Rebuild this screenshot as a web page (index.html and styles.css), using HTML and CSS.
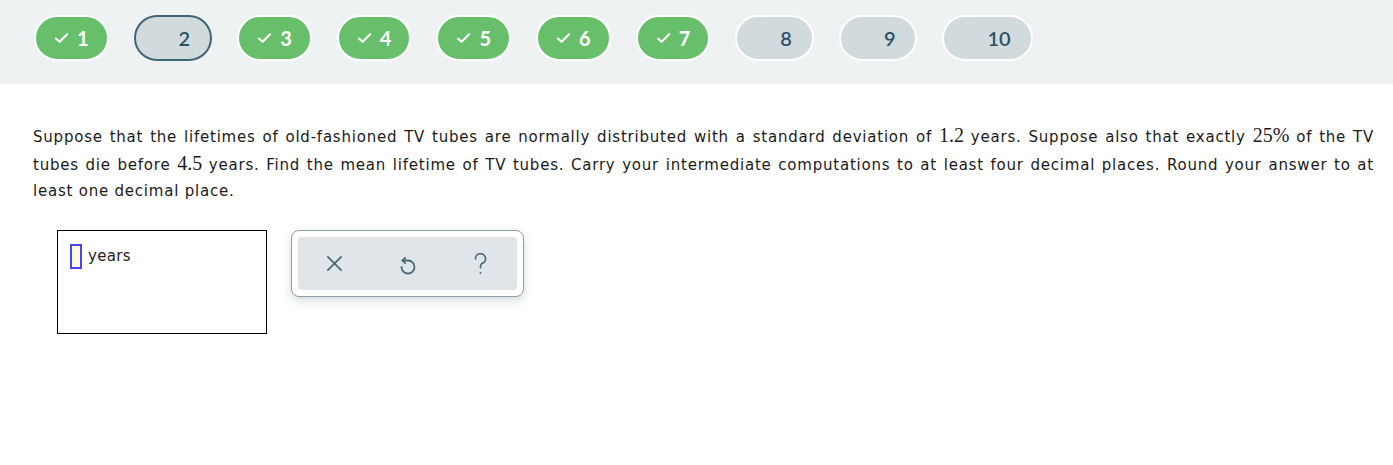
FILE: index.html
```html
<!DOCTYPE html>
<html lang="en">
<head>
<meta charset="utf-8">
<title>Question</title>
<link rel="stylesheet" href="styles.css">
</head>
<body>
<nav class="topbar">
  <div class="pill done"><svg class="check" viewBox="0 0 16 12"><path d="M2 6.5 L6 10 L14 2"/></svg><span class="num">1</span></div>
  <div class="pill current"><svg class="check" viewBox="0 0 16 12"><path d="M2 6.5 L6 10 L14 2"/></svg><span class="num">2</span></div>
  <div class="pill done"><svg class="check" viewBox="0 0 16 12"><path d="M2 6.5 L6 10 L14 2"/></svg><span class="num">3</span></div>
  <div class="pill done"><svg class="check" viewBox="0 0 16 12"><path d="M2 6.5 L6 10 L14 2"/></svg><span class="num">4</span></div>
  <div class="pill done"><svg class="check" viewBox="0 0 16 12"><path d="M2 6.5 L6 10 L14 2"/></svg><span class="num">5</span></div>
  <div class="pill done"><svg class="check" viewBox="0 0 16 12"><path d="M2 6.5 L6 10 L14 2"/></svg><span class="num">6</span></div>
  <div class="pill done"><svg class="check" viewBox="0 0 16 12"><path d="M2 6.5 L6 10 L14 2"/></svg><span class="num">7</span></div>
  <div class="pill todo"><svg class="check" viewBox="0 0 16 12"><path d="M2 6.5 L6 10 L14 2"/></svg><span class="num">8</span></div>
  <div class="pill todo"><svg class="check" viewBox="0 0 16 12"><path d="M2 6.5 L6 10 L14 2"/></svg><span class="num">9</span></div>
  <div class="pill todo"><svg class="check" viewBox="0 0 16 12"><path d="M2 6.5 L6 10 L14 2"/></svg><span class="num">10</span></div>
</nav>
<main class="content">
  <p class="question">Suppose that the lifetimes of old-fashioned TV tubes are normally distributed with a standard deviation of <span class="math">1.2</span> years. Suppose also that exactly <span class="math">25%</span> of the TV tubes die before <span class="math">4.5</span> years. Find the mean lifetime of TV tubes. Carry your intermediate computations to at least four decimal places. Round your answer to at least one decimal place.</p>
  <div class="answer-row">
    <div class="answer-box">
      <span class="blank"></span><span class="unit">years</span>
    </div>
    <div class="toolbar">
      <div class="toolbar-inner">
        <button class="tool" aria-label="Clear"><svg viewBox="0 0 18 18"><path d="M2 2 L16 16 M16 2 L2 16"/></svg></button>
        <button class="tool" aria-label="Undo"><svg viewBox="0 0 16 22"><path d="M2.5 7.5 L8 7.5 A6.5 6.5 0 1 1 1.5 14"/><path d="M5.2 4.8 L2.5 7.5 L5.2 10.2"/></svg></button>
        <button class="tool" aria-label="Help"><svg viewBox="0 0 16 24"><path d="M2.5 6.5 A5.5 5.5 0 1 1 9.5 11.5 C8 12.2 8 13.5 8 16"/><circle class="dot" cx="8" cy="21.5" r="1.1"/></svg></button>
      </div>
    </div>
  </div>
</main>
</body>
</html>
```
FILE: styles.css
```css
html, body {
  margin: 0;
  padding: 0;
  background: #ffffff;
}

.topbar {
  display: flex;
  align-items: center;
  gap: 25px;
  height: 84px;
  box-sizing: border-box;
  padding: 0 0 8px 34px;
  background: #eef2f3;
}

.pill {
  display: flex;
  align-items: center;
  height: 46px;
  box-sizing: border-box;
  padding: 0 18px 0 18px;
  border: 2px solid #ffffff;
  border-radius: 23px;
  font-family: "Lato", "Open Sans", sans-serif;
  font-weight: 700;
  font-size: 20px;
}

.pill .check {
  width: 15px;
  height: 12px;
  margin-right: 8px;
  fill: none;
  stroke: #ffffff;
  stroke-width: 2.2;
  stroke-linecap: round;
  stroke-linejoin: round;
}

.pill.done {
  background: #67bf6b;
  color: #ffffff;
}

.pill.todo,
.pill.current {
  background: #d1dadd;
  color: #2c5364;
  font-weight: 600;
  padding-left: 20px;
  padding-right: 20px;
}

.pill.todo .check,
.pill.current .check {
  visibility: hidden;
}

.pill.current {
  border-color: #3f6577;
}

.content {
  padding: 0 19px 0 33px;
}

.question {
  margin: 38px 0 0;
  font-family: "DejaVu Sans", Verdana, sans-serif;
  font-size: 15px;
  letter-spacing: 0.78px;
  line-height: 26px;
  color: #1a1a1a;
  text-align: justify;
}

.math {
  font-family: "Liberation Serif", "Times New Roman", serif;
  font-size: 20px;
  letter-spacing: 0;
}

.answer-row {
  display: flex;
  align-items: flex-start;
  gap: 24px;
  margin: 26px 0 0 24px;
}

.answer-box {
  display: flex;
  align-items: flex-start;
  width: 210px;
  height: 104px;
  box-sizing: border-box;
  border: 1px solid #000000;
  padding: 13px 0 0 12px;
}

.blank {
  width: 12px;
  height: 25px;
  box-sizing: border-box;
  border: 2px solid #4444fa;
  background: #fffbd6;
}

.unit {
  margin-left: 6px;
  font-family: "DejaVu Sans", Verdana, sans-serif;
  font-size: 15px;
  letter-spacing: 0.3px;
  line-height: 24px;
  color: #222222;
}

.toolbar {
  width: 233px;
  height: 67px;
  box-sizing: border-box;
  padding: 6px;
  border: 1px solid #8ba0aa;
  border-radius: 8px;
  background: #ffffff;
  box-shadow: 0 4px 10px rgba(40, 60, 70, 0.18);
}

.toolbar-inner {
  display: flex;
  justify-content: space-around;
  align-items: center;
  height: 100%;
  border-radius: 4px;
  background: #dfe5e8;
}

.tool {
  display: flex;
  align-items: center;
  justify-content: center;
  width: 40px;
  height: 40px;
  padding: 0;
  border: 0;
  background: transparent;
}

.tool svg {
  fill: none;
  stroke: #4a6976;
  stroke-width: 1.8;
  stroke-linecap: round;
  stroke-linejoin: round;
}

.tool:nth-child(1) svg { width: 17px; height: 17px; }
.tool:nth-child(2) svg { width: 16px; height: 22px; }
.tool:nth-child(3) svg { width: 15px; height: 22px; }

.tool .dot {
  fill: #4a6976;
  stroke: none;
}
```
